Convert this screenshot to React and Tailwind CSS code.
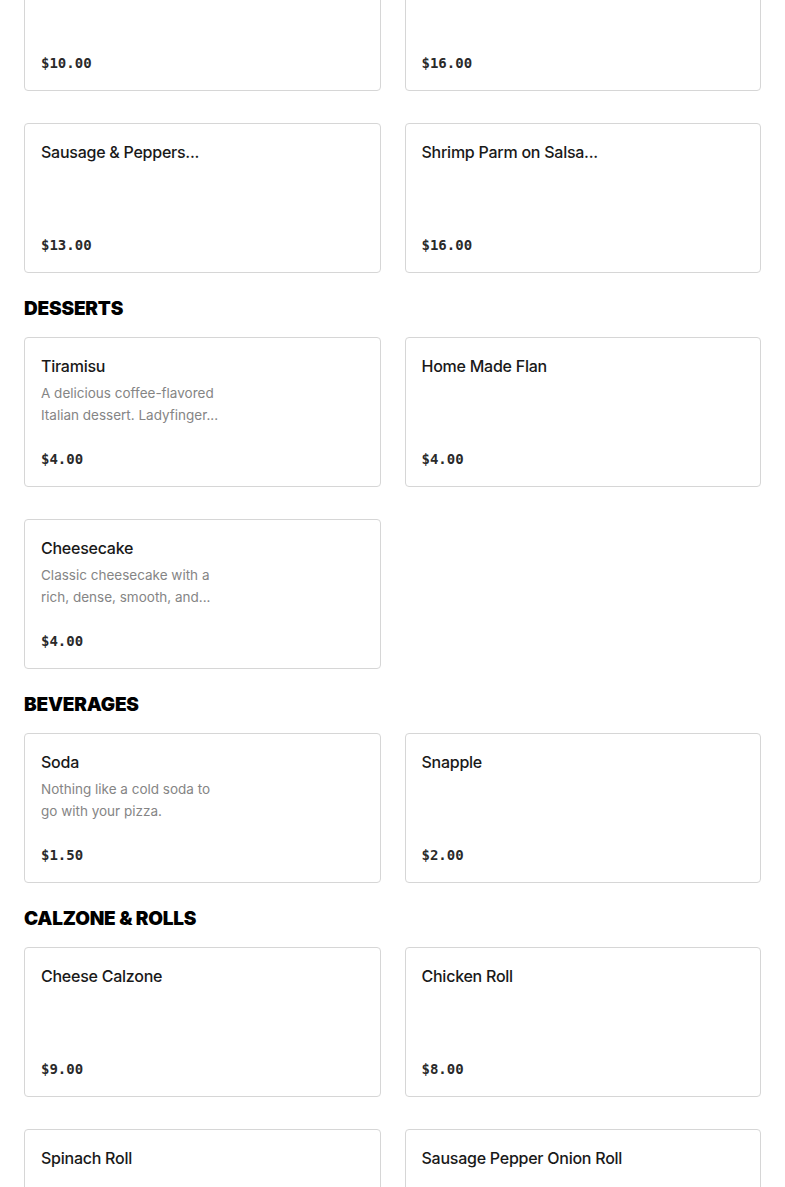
import React from "react"

// ── Menu data ──────────────────────────────────────────
const sections = [
  {
    name: null,
    items: [
      { id: "a", name: "", price: "$10.00" },
      { id: "b", name: "", price: "$16.00" },
      { id: "c", name: "Sausage & Peppers...", price: "$13.00" },
      { id: "d", name: "Shrimp Parm on Salsa...", price: "$16.00" },
    ],
  },
  {
    name: "DESSERTS",
    items: [
      { id: "e", name: "Tiramisu", desc: "A delicious coffee-flavored Italian dessert. Ladyfinger...", price: "$4.00" },
      { id: "f", name: "Home Made Flan", price: "$4.00" },
      { id: "g", name: "Cheesecake", desc: "Classic cheesecake with a rich, dense, smooth, and...", price: "$4.00" },
    ],
  },
  {
    name: "BEVERAGES",
    items: [
      { id: "h", name: "Soda", desc: "Nothing like a cold soda to go with your pizza.", price: "$1.50" },
      { id: "i", name: "Snapple", price: "$2.00" },
    ],
  },
  {
    name: "CALZONE & ROLLS",
    items: [
      { id: "j", name: "Cheese Calzone", price: "$9.00" },
      { id: "k", name: "Chicken Roll", price: "$8.00" },
      { id: "l", name: "Spinach Roll", price: "$8.00" },
      { id: "m", name: "Sausage Pepper Onion Roll", price: "$9.00" },
    ],
  },
]

function MenuCard({ item }) {
  return (
    <div className="h-[150px] bg-white border border-[#d6d6d6] rounded-[4px] px-4 pt-4 pb-4 flex flex-col justify-between">
      <div>
        {item.name && (
          <p className="text-[16px] leading-6 font-medium text-[#191919] tracking-[-0.25px]">{item.name}</p>
        )}
        {item.desc && (
          <p className="mt-1 w-[185px] text-[13.5px] leading-[22px] text-[#858585] line-clamp-2">
            {item.desc}
          </p>
        )}
      </div>
      <p className="text-[14px] leading-[22px] font-bold text-[#2a2a2a] font-['DejaVu_Sans_Mono',monospace]">
        {item.price}
      </p>
    </div>
  )
}

export default function App() {
  return (
    <div className="min-h-screen bg-white font-['Inter',sans-serif] overflow-hidden">
      <div className="px-6 -mt-[59px]">
        {sections.map((section, i) => (
          <div key={i}>
            {section.name && (
              <h2 className="mt-6 mb-4 text-[19px] leading-6 font-black text-black tracking-[-0.2px]">
                {section.name}
              </h2>
            )}
            <div className="grid grid-cols-2 gap-x-6 gap-y-8">
              {section.items.map(item => (
                <MenuCard key={item.id} item={item} />
              ))}
            </div>
          </div>
        ))}
      </div>
    </div>
  )
}
